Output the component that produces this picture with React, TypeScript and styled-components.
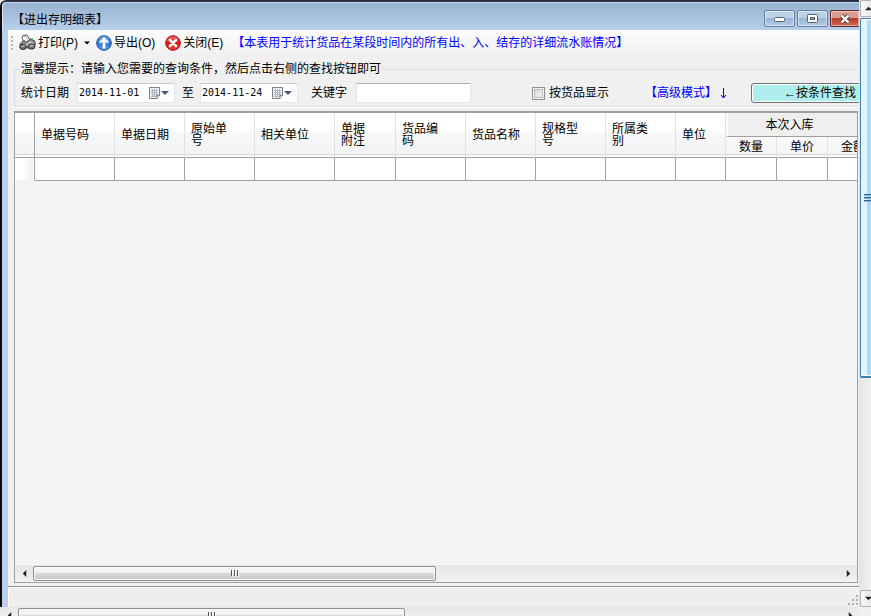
import React from "react";
import styled, { createGlobalStyle } from "styled-components";

const GlobalStyle = createGlobalStyle`
  * { box-sizing: border-box; }
  body {
    margin: 0;
    overflow: hidden;
    color: #000;
    background: #f0f0f0;
    font: 12px/16px "Liberation Sans", "Noto Sans CJK SC", sans-serif;
  }
  button, input { font: inherit; color: inherit; margin: 0; padding: 0; }
`;

const Screen = styled.div`
  display: grid;
  grid-template-columns: minmax(0, 1fr) 12px;
  grid-template-rows: minmax(0, 1fr) 9px;
  height: 100vh;
  overflow: hidden;
`;

const Frame = styled.main`
  display: flex;
  flex-direction: column;
  min-width: 0;
  overflow: hidden;
  border-left: 2px solid #0b0d12;
  border-top: 2px solid #30303e;
  border-top-left-radius: 6px;
  background: #b9d1ea;
`;

const TitleBar = styled.header`
  display: flex;
  flex: none;
  align-items: center;
  justify-content: space-between;
  height: 28px;
  padding-left: 9px;
  border-left: 1px solid #dbe7f4;
  border-top: 1px solid #c4d6ea;
  background: linear-gradient(#98b3d1, #b7cfe9);
  border-top-left-radius: 5px;
`;

const Title = styled.h1`
  margin: 0;
  padding-top: 6px;
  font-size: 12px;
  line-height: 16px;
  font-weight: 400;
`;

const Captions = styled.div`
  display: flex;
  gap: 2px;
  margin-top: 4px;
`;

const CaptionButton = styled.button<{ $close?: boolean }>`
  display: flex;
  align-items: center;
  justify-content: center;
  width: ${(p) => (p.$close ? 29 : 31)}px;
  height: 17px;
  border: 1px solid ${(p) => (p.$close ? "#5c2730" : "#6480a1")};
  border-right-width: ${(p) => (p.$close ? 0 : 1)}px;
  border-radius: ${(p) => (p.$close ? "2px 0 0 2px" : "2px")};
  box-shadow: inset 0 0 0 1px rgba(255, 255, 255, 0.45);
  background: ${(p) =>
    p.$close
      ? "linear-gradient(#dc9b8e 0 45%, #b83a27 50%, #cf6a50)"
      : "linear-gradient(#bcd1e7 0 45%, #9ab6d3 50%, #b2cce6)"};
`;

const Client = styled.div`
  display: flex;
  flex: 1;
  flex-direction: column;
  min-height: 0;
  margin-left: 6px;
  overflow: hidden;
  background: #f0f0f0;
`;

const Toolbar = styled.div`
  display: flex;
  flex: none;
  align-items: center;
  height: 25px;
  padding-left: 3px;
  white-space: nowrap;
  background: linear-gradient(#fdfdfd, #f0f0f0);
`;

const Grip = styled.span`
  width: 2px;
  height: 14px;
  margin-right: 6px;
  background: repeating-linear-gradient(#b8b8b8 0 2px, transparent 2px 4px);
`;

const ToolButton = styled.button`
  display: flex;
  align-items: center;
  gap: 2px;
  border: 0;
  background: none;
  white-space: nowrap;
`;

const DropButton = styled(ToolButton)`
  justify-content: center;
  width: 18px;
  height: 18px;
`;

const CloseTool = styled(ToolButton)`
  margin-left: 10px;
`;

const Note = styled.span`
  margin-left: 9px;
  color: #0000ff;
`;

const Query = styled.fieldset`
  flex: none;
  min-width: 0;
  height: 46px;
  margin: 6px 0 4px 6px;
  padding: 0;
  border: 1px solid #d5dfe5;
  border-right: 0;
  border-radius: 3px;
  box-shadow: 0 1px 0 #fff;
`;

const Legend = styled.legend`
  margin-left: 5px;
  padding: 0 1px;
  line-height: 16px;
`;

const Fields = styled.div`
  display: flex;
  align-items: center;
  height: 24px;
  margin-top: 4px;
  padding-left: 6px;
  overflow: hidden;
  white-space: nowrap;
`;

const FieldLabel = styled.label`
  flex: none;
  margin-right: 8px;
`;

const ToLabel = styled(FieldLabel)`
  margin: 0 6px 0 7px;
`;

const KeyLabel = styled(FieldLabel)`
  margin: 0 9px 0 13px;
`;

const DateBox = styled.div`
  display: flex;
  flex: none;
  align-items: center;
  width: 98px;
  height: 20px;
  border: 1px solid #e3e6ea;
  border-top-color: #c9ccd2;
  background: #fff;
`;

const DateInput = styled.input`
  width: 70px;
  height: 16px;
  padding-left: 1px;
  border: 0;
  outline: 0;
  background: none;
  font: 10px/16px "DejaVu Sans Mono", monospace;
`;

const CalendarButton = styled.button`
  display: flex;
  width: 24px;
  height: 14px;
  border: 0;
  background: none;
`;

const KeyInput = styled.input`
  flex: none;
  width: 115px;
  height: 20px;
  border: 1px solid #e3e6ea;
  border-top-color: #abadb3;
  background: #fff;
`;

const CheckLabel = styled.label`
  display: flex;
  flex: none;
  align-items: center;
  gap: 4px;
  margin-left: 61px;
`;

const CheckBox = styled.input`
  appearance: none;
  width: 13px;
  height: 13px;
  border: 1px solid #8e8f8f;
  box-shadow: inset 0 0 0 1px #f4f4f4, inset 0 0 0 2px #b9bdc2;
  background: linear-gradient(135deg, #cfd3d8, #fafafa);
`;

const ModeLink = styled.a`
  display: flex;
  flex: none;
  align-items: center;
  gap: 1px;
  margin-left: 36px;
  color: #0000ff;
  text-decoration: none;
`;

const SearchButton = styled.button`
  flex: 1 0 140px;
  height: 20px;
  margin-left: 24px;
  padding-left: 32px;
  border: 1px solid #707070;
  border-radius: 3px;
  box-shadow: inset 0 0 0 1px #fff;
  background: #afeeee;
  text-align: left;
  line-height: 16px;
`;

const GridPanel = styled.section`
  display: flex;
  flex: 1;
  flex-direction: column;
  min-height: 0;
  margin: 0 1px 3px 6px;
  border: 1px solid #a0a0a0;
  border-top: 2px solid #a0a0a0;
  background: #f4f4f4;
`;

const GridBody = styled.div`
  flex: 1;
  min-height: 0;
  overflow: hidden;
`;

const Table = styled.table`
  width: 864px;
  table-layout: fixed;
  border-collapse: separate;
  border-spacing: 0;
`;

const Col = styled.col<{ $w: number }>`
  width: ${(p) => p.$w}px;
`;

const HeadCell = styled.th<{ $marker?: boolean }>`
  height: 45px;
  padding: 0 6px;
  border-right: 1px solid ${(p) => (p.$marker ? "#a0a0a0" : "#dfe1e4")};
  border-bottom: 1px solid #a0a0a0;
  box-shadow: inset 0 -2px 0 #fbfbfb, inset 0 -3px 0 #d5d5d5;
  background: linear-gradient(#fff 0 40%, #f7f8fa 45%, #f1f2f4);
  font-weight: 400;
  line-height: 12px;
  text-align: left;
  white-space: nowrap;
`;

const GroupCell = styled.th`
  height: 24px;
  padding: 0 28px 0 0;
  border-left: 2px solid #fafafa;
  border-bottom: 1px solid #a0a0a0;
  background: #efefef;
  font-weight: 400;
`;

const SubCell = styled.th`
  height: 21px;
  padding: 0;
  border-right: 1px solid #dfe1e4;
  border-bottom: 1px solid #a0a0a0;
  box-shadow: inset 0 -2px 0 #fbfbfb, inset 0 -3px 0 #d5d5d5;
  background: linear-gradient(#fbfbfc, #f1f2f4);
  font-weight: 400;
  line-height: 16px;
`;

const Cell = styled.td`
  height: 23px;
  padding: 0;
  border-right: 1px solid #a0a0a0;
  border-bottom: 1px solid #a0a0a0;
  background: #fff;
`;

const MarkerCell = styled(Cell)`
  border-bottom-color: #f4f4f4;
  background: linear-gradient(90deg, #fff 0 40%, #eef0f3 90%, #fff);
`;

const HScroll = styled.div<{ $outer?: boolean }>`
  display: flex;
  flex: none;
  align-items: ${(p) => (p.$outer ? "flex-start" : "center")};
  height: ${(p) => (p.$outer ? 9 : 17)}px;
  padding-top: ${(p) => (p.$outer ? 1 : 0)}px;
  overflow: hidden;
  background: linear-gradient(#e6e6e6, #f0f0f0);
`;

const ArrowButton = styled.button`
  display: flex;
  flex: none;
  align-items: center;
  justify-content: center;
  width: 18px;
  height: 15px;
  border: 0;
  background: none;
`;

const Track = styled.div`
  flex: 1;
  height: 15px;
`;

const HThumb = styled.div<{ $share: number }>`
  display: flex;
  align-items: center;
  justify-content: center;
  width: ${(p) => p.$share}%;
  height: 15px;
  border: 1px solid #8f8f8f;
  border-radius: 2px;
  box-shadow: inset 0 0 0 1px #fafafa;
  background: linear-gradient(#f3f3f3 0 40%, #d9d9dc 50%, #c5c5c8);
`;

const StatusBar = styled.footer`
  display: flex;
  flex: none;
  align-items: flex-end;
  justify-content: flex-end;
  height: 21px;
  border-top: 1px solid #8c8c8c;
  box-shadow: inset 1px 1px 0 #fff;
  background: #f0eded;
`;

const VScroll = styled.div`
  display: flex;
  flex-direction: column;
  padding-left: 1px;
  overflow: hidden;
  background: linear-gradient(90deg, #e3e3e3, #f2f2f2);
`;

const VArrow = styled.button`
  display: flex;
  flex: none;
  align-items: center;
  justify-content: center;
  width: 17px;
  height: 17px;
  border: 1px solid #b0b0b0;
  border-radius: 2px;
  background: linear-gradient(90deg, #fafafa, #dedede);
`;

const VTrack = styled.div`
  flex: 1;
  padding-top: 1px;
`;

const VThumb = styled.div`
  display: flex;
  align-items: center;
  justify-content: flex-start;
  width: 17px;
  height: 63%;
  padding-left: 3px;
  border: 1px solid #3c7fb1;
  border-bottom-width: 2px;
  border-radius: 2px;
  box-shadow: inset 0 0 0 1px #fff;
  background: linear-gradient(90deg, #e3f4fc 0 35%, #a9dbf5 45%);
`;

const Corner = styled.div`
  background: #f0f0f0;
`;

type Dir = "left" | "right" | "up" | "down";
const shapes: Record<Dir, string> = {
  left: "M6 0v8L2 4z",
  right: "M2 0v8l4-4z",
  up: "M0 6h8L4 2z",
  down: "M0 2h8L4 6z",
};

const Triangle = ({ dir, size = 7, fill = "#222" }: { dir: Dir; size?: number; fill?: string }) => (
  <svg width={size} height={size} viewBox="0 0 8 8" aria-hidden="true">
    <path d={shapes[dir]} fill={fill} />
  </svg>
);

const ThumbGrip = () => (
  <svg width="9" height="7" viewBox="0 0 9 7" aria-hidden="true">
    <path d="M1.500 0v6M4.500 0v6M7.500 0v6" stroke="#555" />
    <path d="M2.500 1v6M5.500 1v6M8.500 1v6" stroke="#fff" />
  </svg>
);

const PrinterIcon = () => (
  <svg width="17" height="17" viewBox="0 0 17 17" aria-hidden="true">
    <path d="M4.500 8L3 3.500 4 1.500l4-.5 3 5-2 3z" fill="#fff" stroke="#444" strokeWidth=".9" />
    <path d="M3.500 3.500l3-1.500 3 5" fill="none" stroke="#aaa" strokeWidth=".8" />
    <path d="M.8 10l4-3.500 3 1.500 3.500-3 4.500 2 .7 3.500-6.500 3.500-8-.5z" fill="#8a8a8a" stroke="#333" strokeWidth=".8" />
    <path d="M1.500 10l4.500 1 5-4 4 1.500-5 3-3 1.500z" fill="#c2c2c2" />
    <ellipse cx="4" cy="13" rx="3.300" ry="2.500" fill="#777" stroke="#292929" />
    <ellipse cx="12.500" cy="12.500" rx="3.500" ry="2.600" fill="#777" stroke="#292929" />
    <path d="M2.500 12.500l3-1M10.800 12l3.400-1" stroke="#ddd" />
    <path d="M12 5h2" stroke="#2eb84d" strokeWidth="1.500" />
  </svg>
);

const ExportIcon = () => (
  <svg width="16" height="16" viewBox="0 0 16 16" aria-hidden="true">
    <defs>
      <linearGradient id="blueBall" x2="0" y2="1">
        <stop stopColor="#77adf0" />
        <stop offset=".5" stopColor="#2f72d2" />
        <stop offset="1" stopColor="#5a9cf0" />
      </linearGradient>
    </defs>
    <circle cx="8" cy="8" r="7.300" fill="url(#blueBall)" stroke="#1b4ea4" />
    <path d="M8 2l5 5-1.500 1.500-2-1.900V13.500h-3V6.600l-2 1.900L3 7z" fill="#fff" />
  </svg>
);

const CloseIcon = () => (
  <svg width="16" height="16" viewBox="0 0 16 16" aria-hidden="true">
    <defs>
      <linearGradient id="redBall" x2="0" y2="1">
        <stop stopColor="#f36a62" />
        <stop offset=".5" stopColor="#db1a1a" />
        <stop offset="1" stopColor="#ee3b35" />
      </linearGradient>
    </defs>
    <circle cx="8" cy="8" r="7.300" fill="url(#redBall)" stroke="#a30f12" />
    <path d="M5 5l6 6M11 5l-6 6" stroke="#fff" strokeWidth="2.600" strokeLinecap="round" />
  </svg>
);

const CalendarIcon = () => (
  <svg width="24" height="14" viewBox="0 0 24 14" aria-hidden="true">
    <path d="M1.500 1.500h10v8l-2.500 3H1.500z" fill="#eef1f5" stroke="#7c7f88" />
    <path d="M3 4.500h7M3 6.500h7M3 8.500h7M3 10.500h5M4.500 3v8M6.500 3v8M8.500 3v8" stroke="#a5adba" strokeWidth=".8" />
    <path d="M9 12.500v-3h2.500" fill="#fff" stroke="#7c7f88" />
    <path d="M13 5h8l-4 4z" fill="#44597b" />
  </svg>
);

const DateField = ({ id, value, label }: { id: string; value: string; label: string }) => (
  <DateBox>
    <DateInput id={id} defaultValue={value} />
    <CalendarButton type="button" aria-label={label}>
      <CalendarIcon />
    </CalendarButton>
  </DateBox>
);

const columns: { lines: string[]; width: number }[] = [
  { lines: ["单据号码"], width: 80 },
  { lines: ["单据日期"], width: 70 },
  { lines: ["原始单", "号"], width: 70 },
  { lines: ["相关单位"], width: 80 },
  { lines: ["单据", "附注"], width: 61 },
  { lines: ["货品编", "码"], width: 70 },
  { lines: ["货品名称"], width: 70 },
  { lines: ["规格型", "号"], width: 70 },
  { lines: ["所属类", "别"], width: 70 },
  { lines: ["单位"], width: 50 },
];
const stockIn = [
  { text: "数量", width: 51 },
  { text: "单价", width: 51 },
  { text: "金额", width: 51 },
];
const widths = [...columns, ...stockIn].map((c) => c.width);

export default function App() {
  return (
    <>
      <GlobalStyle />
      <Screen>
        <Frame>
          <TitleBar>
            <Title>【进出存明细表】</Title>
            <Captions>
              <CaptionButton type="button" aria-label="最小化">
                <svg width="13" height="7" viewBox="0 0 13 7">
                  <rect x="1.500" y="2.500" width="10" height="4" rx="1" fill="#fff" stroke="#59626e" />
                </svg>
              </CaptionButton>
              <CaptionButton type="button" aria-label="最大化">
                <svg width="11" height="9" viewBox="0 0 11 9">
                  <rect x=".5" y=".5" width="10" height="8" rx="1" fill="#fff" stroke="#59626e" />
                  <rect x="3.500" y="3.500" width="4" height="2" fill="#8fa9c6" stroke="#59626e" />
                </svg>
              </CaptionButton>
              <CaptionButton type="button" aria-label="关闭" $close>
                <svg width="12" height="10" viewBox="0 0 12 10">
                  <path d="M2.500 1.500l7 7M9.500 1.500l-7 7" stroke="#59424b" strokeWidth="4" />
                  <path d="M2.500 1.500l7 7M9.500 1.500l-7 7" stroke="#fff" strokeWidth="2.400" />
                </svg>
              </CaptionButton>
            </Captions>
          </TitleBar>
          <Client>
            <Toolbar>
              <Grip />
              <ToolButton type="button">
                <PrinterIcon />
                打印(P)
              </ToolButton>
              <DropButton type="button" aria-label="打印选项">
                <Triangle dir="down" size={6} fill="#000" />
              </DropButton>
              <ToolButton type="button">
                <ExportIcon />
                导出(O)
              </ToolButton>
              <CloseTool type="button">
                <CloseIcon />
                关闭(E)
              </CloseTool>
              <Note>【本表用于统计货品在某段时间内的所有出、入、结存的详细流水账情况】</Note>
            </Toolbar>
            <Query>
              <Legend>温馨提示：请输入您需要的查询条件，然后点击右侧的查找按钮即可</Legend>
              <Fields>
                <FieldLabel htmlFor="from">统计日期</FieldLabel>
                <DateField id="from" value="2014-11-01" label="选择开始日期" />
                <ToLabel htmlFor="to">至</ToLabel>
                <DateField id="to" value="2014-11-24" label="选择结束日期" />
                <KeyLabel htmlFor="keyword">关键字</KeyLabel>
                <KeyInput id="keyword" type="text" />
                <CheckLabel>
                  <CheckBox type="checkbox" />
                  按货品显示
                </CheckLabel>
                <ModeLink href="#advanced">
                  【高级模式】
                  <svg width="9" height="11" viewBox="0 0 9 11" aria-hidden="true">
                    <path d="M5.500 0v10M3 7l2.500 3L8 7" fill="none" stroke="#00f" />
                  </svg>
                </ModeLink>
                <SearchButton type="button">←按条件查找</SearchButton>
              </Fields>
            </Query>
            <GridPanel>
              <GridBody>
                <Table>
                  <colgroup>
                    <Col $w={20} />
                    {widths.map((w, i) => (
                      <Col key={i} $w={w} />
                    ))}
                  </colgroup>
                  <thead>
                    <tr>
                      <HeadCell rowSpan={2} $marker />
                      {columns.map((c) => (
                        <HeadCell key={c.lines.join("")} rowSpan={2} scope="col">
                          {c.lines[0]}
                          {c.lines[1] && <br />}
                          {c.lines[1]}
                        </HeadCell>
                      ))}
                      <GroupCell colSpan={3} scope="colgroup">
                        本次入库
                      </GroupCell>
                    </tr>
                    <tr>
                      {stockIn.map((c) => (
                        <SubCell key={c.text} scope="col">
                          {c.text}
                        </SubCell>
                      ))}
                    </tr>
                  </thead>
                  <tbody>
                    <tr>
                      <MarkerCell />
                      {widths.map((_, i) => (
                        <Cell key={i} />
                      ))}
                    </tr>
                  </tbody>
                </Table>
              </GridBody>
              <HScroll>
                <ArrowButton type="button" aria-label="向左滚动">
                  <Triangle dir="left" />
                </ArrowButton>
                <Track>
                  <HThumb $share={50}>
                    <ThumbGrip />
                  </HThumb>
                </Track>
                <ArrowButton type="button" aria-label="向右滚动">
                  <Triangle dir="right" />
                </ArrowButton>
              </HScroll>
            </GridPanel>
            <StatusBar>
              <svg width="11" height="12" viewBox="0 0 11 12" aria-hidden="true">
                <path
                  d="M8 0h2v2H8zM4 4h2v2H4zM8 4h2v2H8zM0 8h2v2H0zM4 8h2v2H4zM8 8h2v2H8z"
                  fill="#b3b0b0"
                />
              </svg>
            </StatusBar>
          </Client>
        </Frame>
        <VScroll>
          <VArrow type="button" aria-label="向上滚动">
            <Triangle dir="up" />
          </VArrow>
          <VTrack>
            <VThumb>
              <svg width="8" height="8" viewBox="0 0 8 8" aria-hidden="true">
                <path d="M0 .5h8M0 3.500h8M0 6.500h8" stroke="#2b6a96" />
                <path d="M0 1.500h8M0 4.500h8M0 7.500h8" stroke="#7fb8da" />
              </svg>
            </VThumb>
          </VTrack>
          <VArrow type="button" aria-label="向下滚动">
            <Triangle dir="down" />
          </VArrow>
        </VScroll>
        <HScroll $outer>
          <ArrowButton type="button" aria-label="页面向左滚动">
            <Triangle dir="left" />
          </ArrowButton>
          <Track>
            <HThumb $share={47}>
              <ThumbGrip />
            </HThumb>
          </Track>
          <ArrowButton type="button" aria-label="页面向右滚动">
            <Triangle dir="right" />
          </ArrowButton>
        </HScroll>
        <Corner />
      </Screen>
    </>
  );
}
